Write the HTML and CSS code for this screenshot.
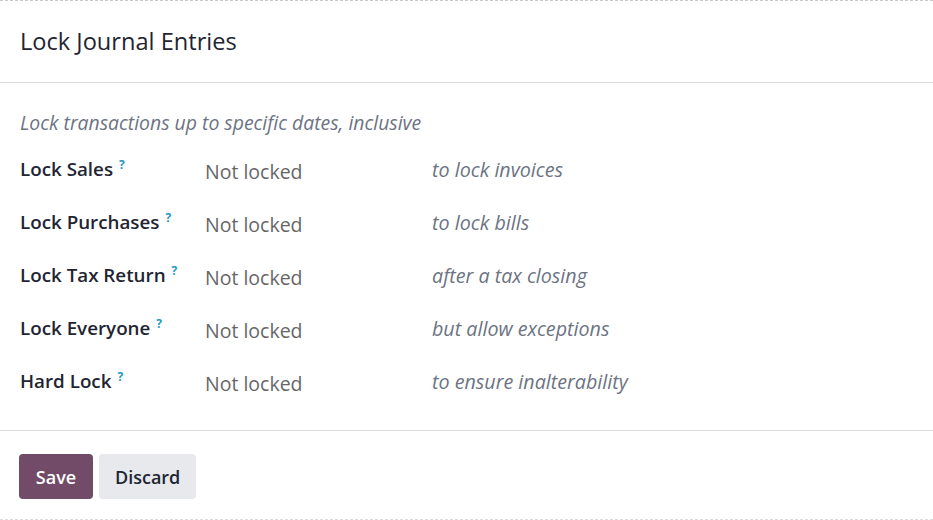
FILE: index.html
```html
<!DOCTYPE html>
<html>
<head>
    <title>Lock Journal Entries</title>
    <link rel="stylesheet" href="styles.css">
</head>
<body>
    <div class="dialog">
        <header class="dialog-header">
            <h4>Lock Journal Entries</h4>
        </header>
        <main class="dialog-body">
            <p class="hint">Lock transactions up to specific dates, inclusive</p>
            <div class="lock-grid">
                <div class="lock-label">Lock Sales<sup>?</sup></div>
                <div class="lock-value">Not locked</div>
                <div class="lock-desc">to lock invoices</div>

                <div class="lock-label">Lock Purchases<sup>?</sup></div>
                <div class="lock-value">Not locked</div>
                <div class="lock-desc">to lock bills</div>

                <div class="lock-label">Lock Tax Return<sup>?</sup></div>
                <div class="lock-value">Not locked</div>
                <div class="lock-desc">after a tax closing</div>

                <div class="lock-label">Lock Everyone<sup>?</sup></div>
                <div class="lock-value">Not locked</div>
                <div class="lock-desc">but allow exceptions</div>

                <div class="lock-label">Hard Lock<sup>?</sup></div>
                <div class="lock-value">Not locked</div>
                <div class="lock-desc">to ensure inalterability</div>
            </div>
        </main>
        <footer class="dialog-footer">
            <button class="btn btn-primary">Save</button>
            <button class="btn btn-secondary">Discard</button>
        </footer>
    </div>
</body>
</html>
```

FILE: styles.css
```css
body {
    margin: 0;
    font-family: "Open Sans", "Noto Sans", sans-serif;
    color: #212529;
    background: #fff;
}
.dialog {
    height: 520px;
    box-sizing: border-box;
    border-top: 1px dashed #c8c8c8;
    border-bottom: 1px dashed #dcdcdc;
    display: flex;
    flex-direction: column;
}
.dialog-header {
    flex-shrink: 0;
    height: 82px;
    box-sizing: border-box;
    border-bottom: 1px solid #dcdcdc;
    padding: 0 20px 2px;
    display: flex;
    align-items: center;
}
.dialog-header h4 {
    margin: 0;
    font-size: 23.6px;
    font-weight: 400;
    color: #1f2533;
}
.dialog-body {
    flex-shrink: 0;
    padding: 27px 20px 0;
    height: 348px;
    box-sizing: border-box;
    border-bottom: 1px solid #dcdcdc;
}
.hint {
    margin: 0 0 7px;
    line-height: 26px;
    font-style: italic;
    font-size: 19.4px;
    color: #6c7383;
}
.lock-grid {
    display: grid;
    grid-template-columns: 185px 227px 1fr;
    grid-auto-rows: 53px;
    align-items: center;
}
.lock-label {
    font-size: 18.8px;
    font-weight: 600;
    color: #1f2533;
    white-space: nowrap;
}
.lock-label sup {
    font-size: 12px;
    font-weight: 700;
    color: #1e98c3;
    margin-left: 6px;
}
.lock-value {
    font-size: 19.5px;
    color: #666;
    padding-top: 3px;
}
.lock-desc {
    font-size: 19.7px;
    font-style: italic;
    color: #6c7383;
}
.dialog-footer {
    flex: 1;
    padding: 23px 19px 0;
    display: flex;
    align-items: flex-start;
    gap: 6px;
}
.btn {
    font-family: inherit;
    font-size: 18px;
    font-weight: 600;
    height: 45px;
    padding: 0 16px;
    border: none;
    border-radius: 4px;
    cursor: pointer;
}
.btn-primary {
    width: 74px;
    background-color: #714b67;
    color: #fff;
}
.btn-secondary {
    width: 97px;
    background-color: #e7e9ed;
    color: #1f2533;
}
```
